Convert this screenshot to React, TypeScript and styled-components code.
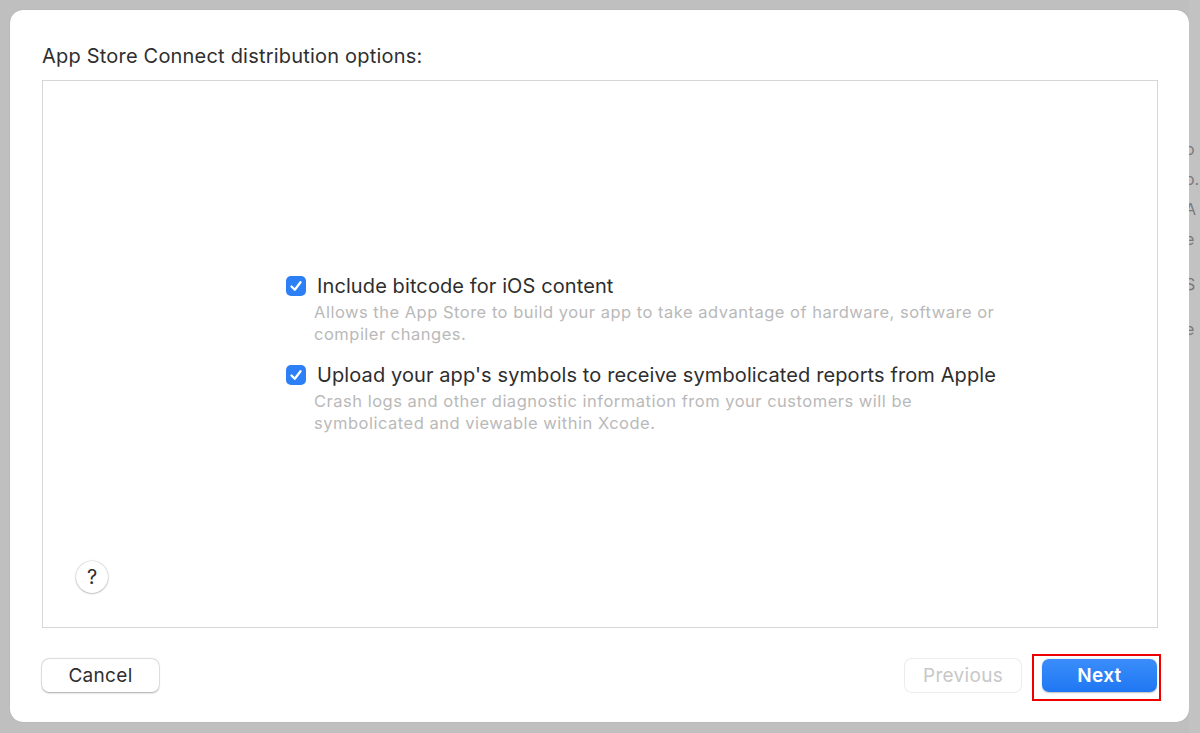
import React from "react";
import styled, { createGlobalStyle } from "styled-components";

const Global = createGlobalStyle`
  html, body { margin: 0; padding: 0; }
  body {
    width: 1200px;
    height: 733px;
    overflow: hidden;
    background: #bdbdbd;
    font-family: Inter, "Helvetica Neue", "Liberation Sans", sans-serif;
    -webkit-font-smoothing: antialiased;
  }
`;

const Page = styled.div`
  display: flex;
  width: 1200px;
  height: 733px;
  box-sizing: border-box;
  padding: 10px 0 11px 10px;
  background: #bfbfbf;
`;

const Dialog = styled.div`
  width: 1179px;
  flex: none;
  background: #ffffff;
  border-radius: 13px;
  box-sizing: border-box;
  padding: 34px 31px 0 32px;
  display: flex;
  flex-direction: column;
  box-shadow: 0 0 1px rgba(0,0,0,0.25);
`;

const Behind = styled.div`
  flex: 1;
  overflow: hidden;
  margin-top: -10px;
  margin-bottom: -11px;
  background: #c2c2c2;
  display: flex;
  flex-direction: column;
  font-size: 16px;
  color: #7a7a7a;
  padding-top: 134px;
`;

const BehindLine = styled.div<{ $h: number }>`
  height: ${(p) => p.$h}px;
  line-height: ${(p) => p.$h}px;
  white-space: nowrap;
  margin-left: -4px;
`;

const Title = styled.div`
  font-size: 20px;
  letter-spacing: 0.2px;
  color: #2f2f2f;
  line-height: 24px;
  height: 24px;
  margin-bottom: 12px;
`;

const Box = styled.div`
  height: 548px;
  border: 1px solid #d6d6d6;
  box-sizing: border-box;
  display: flex;
  flex-direction: column;
  position: relative;
  padding-top: 194px;
  padding-left: 243px;
`;

const Option = styled.div`
  display: grid;
  grid-template-columns: 20px 1fr;
  column-gap: 11px;
  margin-bottom: 19px;
`;

const Check = styled.span`
  width: 20px;
  height: 20px;
  margin-top: 1px;
  border-radius: 5px;
  background: #2c7ff5;
  display: flex;
  align-items: center;
  justify-content: center;
`;

const Label = styled.div`
  font-size: 20px;
  letter-spacing: 0.1px;
  line-height: 22px;
  color: #2e2e2e;
`;

const Desc = styled.div`
  grid-column: 2;
  font-size: 16.5px;
  letter-spacing: 0.5px;
  line-height: 22px;
  color: #b9b9b9;
  margin-left: -3px;
  margin-top: 4px;
  width: 760px;
`;

const Help = styled.button`
  position: absolute;
  left: 33px;
  top: 480px;
  width: 32px;
  height: 32px;
  border-radius: 50%;
  border: none;
  background: #fff;
  box-shadow: 0 0.5px 2px rgba(0,0,0,0.35), 0 0 0 0.5px rgba(0,0,0,0.08);
  font-family: inherit;
  font-size: 20px;
  color: #2e2e2e;
  display: flex;
  align-items: center;
  justify-content: center;
  padding: 0;
`;

const Footer = styled.div`
  display: flex;
  align-items: flex-start;
  margin-top: 31px;
  height: 33px;
`;

const Spacer = styled.div`
  flex: 1;
`;

const Btn = styled.button<{ $primary?: boolean; $disabled?: boolean; $w: number }>`
  width: ${(p) => p.$w}px;
  height: 33px;
  box-sizing: border-box;
  border-radius: 7px;
  border: none;
  font-family: inherit;
  font-size: 19px;
  letter-spacing: 0.3px;
  padding: 0;
  background: ${(p) => (p.$primary ? "linear-gradient(#3a8dfa, #1f77f2)" : "#ffffff")};
  color: ${(p) => (p.$primary ? "#ffffff" : p.$disabled ? "#c8c8c8" : "#2e2e2e")};
  font-weight: ${(p) => (p.$primary ? 600 : 400)};
  box-shadow: ${(p) =>
    p.$primary
      ? "0 0.5px 1.5px rgba(0,0,0,0.25)"
      : p.$disabled
      ? "0 0 0 1px #ececec"
      : "0 0.5px 2px rgba(0,0,0,0.3), 0 0 0 0.5px rgba(0,0,0,0.12)"};
`;

const Highlight = styled.div`
  margin-top: -5px;
  margin-left: 11px;
  margin-right: -3px;
  padding: 3px 2px 7px 8px;
  border: 2px solid #ee0000;
  display: flex;
`;

const CheckMark = () => (
  <svg width="14" height="14" viewBox="0 0 14 14">
    <path d="M2.5 7.5 L5.8 10.8 L11.5 3.2" fill="none" stroke="#fff" strokeWidth="2.3" strokeLinecap="round" strokeLinejoin="round" />
  </svg>
);

export default function App() {
  return (
    <>
      <Global />
      <Page>
        <Dialog>
          <Title>App Store Connect distribution options:</Title>
          <Box>
            <Option>
              <Check><CheckMark /></Check>
              <Label>Include bitcode for iOS content</Label>
              <Desc>
                Allows the App Store to build your app to take advantage of hardware, software or
                <br />
                compiler changes.
              </Desc>
            </Option>
            <Option>
              <Check><CheckMark /></Check>
              <Label>Upload your app's symbols to receive symbolicated reports from Apple</Label>
              <Desc>
                Crash logs and other diagnostic information from your customers will be
                <br />
                symbolicated and viewable within Xcode.
              </Desc>
            </Option>
            <Help>?</Help>
          </Box>
          <Footer>
            <Btn $w={117}>Cancel</Btn>
            <Spacer />
            <Btn $w={116} $disabled>Previous</Btn>
            <Highlight>
              <Btn $w={115} $primary>Next</Btn>
            </Highlight>
          </Footer>
        </Dialog>
        <Behind>
          <BehindLine $h={30}>o</BehindLine>
          <BehindLine $h={30}>o.</BehindLine>
          <BehindLine $h={30}>A</BehindLine>
          <BehindLine $h={30}>e</BehindLine>
          <BehindLine $h={60}>S</BehindLine>
          <BehindLine $h={30}>e</BehindLine>
        </Behind>
      </Page>
    </>
  );
}
